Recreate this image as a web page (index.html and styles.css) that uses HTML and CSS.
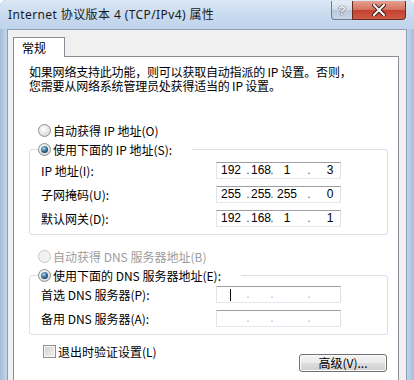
FILE: index.html
```html
<!DOCTYPE html>
<html lang="zh-CN">
<head>
  <meta charset="UTF-8" />
  <meta name="viewport" content="width=device-width, initial-scale=1.0"/>
  <title>Internet 协议版本 4 (TCP/IPv4) 属性</title>
  <link rel="stylesheet" href="styles.css">
</head>
<body>
  <div class="window">
    <div class="titlebar">
      <span class="title">Internet 协议版本 4 (TCP/IPv4) 属性</span>
      <div class="caption-buttons">
        <span class="cap help">?</span>
        <span class="cap close">
          <svg width="14" height="12" viewBox="0 0 14 12">
            <path d="M2 1 L12 11 M12 1 L2 11" stroke="#3a1a14" stroke-width="4" stroke-linecap="square"/>
            <path d="M2 1 L12 11 M12 1 L2 11" stroke="#ffffff" stroke-width="2" stroke-linecap="square"/>
          </svg>
        </span>
      </div>
    </div>

    <div class="client">
      <div class="tabs">
        <span class="tab">常规</span>
      </div>

      <div class="panel">
        <div class="intro">
          <div>如果网络支持此功能，则可以获取自动指派的 IP 设置。否则，</div>
          <div>您需要从网络系统管理员处获得适当的 IP 设置。</div>
        </div>

        <div class="option first"><span class="radio"></span>自动获得 IP 地址(O)</div>

        <fieldset class="group">
          <legend class="option"><span class="radio on"></span>使用下面的 IP 地址(S):</legend>
          <div class="field">
            <label>IP 地址(I):</label>
            <div class="ip">
              <span>192</span><span class="dot">.</span><span>168</span><span class="dot">.</span><span>1</span><span class="dot">.</span><span>3</span>
            </div>
          </div>
          <div class="field">
            <label>子网掩码(U):</label>
            <div class="ip">
              <span>255</span><span class="dot">.</span><span>255</span><span class="dot">.</span><span>255</span><span class="dot">.</span><span>0</span>
            </div>
          </div>
          <div class="field">
            <label>默认网关(D):</label>
            <div class="ip">
              <span>192</span><span class="dot">.</span><span>168</span><span class="dot">.</span><span>1</span><span class="dot">.</span><span>1</span>
            </div>
          </div>
        </fieldset>

        <div class="option disabled dns-auto"><span class="radio off"></span>自动获得 DNS 服务器地址(B)</div>

        <fieldset class="group dns">
          <legend class="option"><span class="radio on"></span>使用下面的 DNS 服务器地址(E):</legend>
          <div class="field">
            <label>首选 DNS 服务器(P):</label>
            <div class="ip empty">
              <span><i class="caret"></i></span><span class="dot">.</span><span></span><span class="dot">.</span><span></span><span class="dot">.</span><span></span>
            </div>
          </div>
          <div class="field">
            <label>备用 DNS 服务器(A):</label>
            <div class="ip empty">
              <span></span><span class="dot">.</span><span></span><span class="dot">.</span><span></span><span class="dot">.</span><span></span>
            </div>
          </div>
        </fieldset>

        <div class="footer">
          <label class="check"><span class="box"></span>退出时验证设置(L)</label>
          <button class="btn">高级(V)...</button>
        </div>
      </div>
    </div>
  </div>
</body>
</html>
```

FILE: styles.css
```css
body {
  margin: 0;
  background: #ffffff;
  font-family: "Noto Sans CJK SC", "Noto Sans", sans-serif;
  font-size: 12px;
  color: #000;
}

.window {
  width: 414px;
  height: 380px;
  overflow: hidden;
  background: linear-gradient(90deg, #a4bcd8 0px, #c3d6ec 7px, #c8daee 50%, #c3d6ec 406px, #a7bfdb 414px);
  border-top-left-radius: 6px;
  border-top-right-radius: 6px;
}

.titlebar {
  height: 29px;
  display: flex;
  justify-content: space-between;
  background: linear-gradient(#dbe8f6, #c6d9ee 60%, #bfd4eb);
  border-top-left-radius: 6px;
  border-top-right-radius: 6px;
}

.title {
  font-family: "Noto Sans", "Noto Sans CJK SC", sans-serif;
  font-size: 12px;
  line-height: 29px;
  padding-left: 8px;
  letter-spacing: 0.4px;
  color: #1a1a1a;
}

.caption-buttons {
  display: flex;
  margin: 1px 8px 0 0;
  height: 18px;
}

.cap {
  display: flex;
  align-items: center;
  justify-content: center;
  height: 18px;
  border: 1px solid #6c7e96;
  border-top: none;
}

.help {
  width: 20px;
  border-right: none;
  border-bottom-left-radius: 4px;
  background: linear-gradient(#e6eef7, #cfdbe9 50%, #b9c9dc 51%, #c8d6e6);
  color: #f4f7fb;
  font-family: "Liberation Sans", sans-serif;
  font-weight: bold;
  font-size: 13px;
  text-shadow: 0 0 1px #445, 0 0 1px #445;
}

.close {
  width: 52px;
  border-color: #6b2a22;
  border-bottom-right-radius: 4px;
  background: linear-gradient(#e6a191, #d4705e 50%, #c3402f 51%, #cf5a43);
}

.client {
  width: 386px;
  height: 360px;
  margin-left: 7px;
  padding: 7px 7px 0 5px;
  background: #f0f0f0;
  border: 1px solid #8a9db5;
  border-bottom: none;
}

.tabs {
  display: flex;
}

.tab {
  width: 52px;
  height: 20px;
  margin-bottom: -1px;
  padding-left: 8px;
  line-height: 20px;
  background: #ffffff;
  border: 1px solid #898c95;
  border-bottom: none;
  position: relative;
  z-index: 1;
  box-sizing: border-box;
}

.panel {
  height: 330px;
  padding: 8px 10px 0 15px;
  background: #ffffff;
  border: 1px solid #898c95;
}

.intro {
  line-height: 14px;
  letter-spacing: -0.2px;
}

.intro div {
  height: 14px;
  white-space: nowrap;
}

.option {
  display: flex;
  align-items: center;
  height: 19px;
  white-space: nowrap;
}

.option.first {
  margin-top: 28px;
  padding-left: 9px;
}

.radio {
  width: 11px;
  height: 11px;
  margin-right: 2px;
  border: 1px solid #8e8f8f;
  border-radius: 50%;
  background: radial-gradient(circle at 40% 35%, #ffffff, #dcdcdc 70%, #c4c4c4);
  flex: none;
  position: relative;
}

.radio.on::after {
  content: "";
  position: absolute;
  left: 2px;
  top: 2px;
  width: 7px;
  height: 7px;
  border-radius: 50%;
  background: radial-gradient(circle at 40% 35%, #9fd8f2, #2c5d86 55%, #1b2f44);
}

.radio.off {
  border-color: #c8c8c8;
  background: #f2f2f2;
}

.disabled {
  color: #9d9d9d;
}

.group {
  margin: 0;
  padding: 3px 0 7px 11px;
  border: 1px solid #d5dfe5;
  border-radius: 3px;
}

.group legend {
  margin-left: -3px;
  padding: 0 20px 0 0;
}

.field {
  display: grid;
  grid-template-columns: 175px 125px;
  align-items: center;
  height: 17px;
}

.field + .field {
  margin-top: 7px;
}

.ip {
  height: 17px;
  box-sizing: border-box;
  display: grid;
  grid-template-columns: 28px 6px 16px 10px 20px 24px 18px;
  align-items: center;
  border: 1px solid #abadb3;
  border-top-color: #9c9ea4;
  border-left-color: #e2e3ea;
  border-right-color: #dbdfe6;
  border-bottom-color: #e3e9ef;
  background: #fff;
  font-family: "Liberation Sans", sans-serif;
  font-size: 12px;
  line-height: 15px;
  text-align: center;
}

.ip .dot {
  color: #555;
}

.ip.empty .dot {
  color: #b0b0b0;
}

.caret {
  display: inline-block;
  width: 1px;
  height: 12px;
  background: #000;
  vertical-align: middle;
  margin-left: -2px;
}

.dns-auto {
  margin-top: 12px;
  padding-left: 9px;
}

.dns {
  padding-top: 1px;
}

.footer {
  display: flex;
  justify-content: space-between;
  align-items: flex-start;
  padding: 10px 1px 0 14px;
}

.check {
  display: flex;
  align-items: center;
  height: 13px;
  white-space: nowrap;
}

.box {
  width: 11px;
  height: 11px;
  margin-right: 2px;
  border: 1px solid #8f8f8f;
  background: linear-gradient(135deg, #d2d2d2, #f2f2f2);
  box-shadow: inset 0 0 0 1px #f7f7f7;
}

.btn {
  margin-top: 9px;
  width: 88px;
  height: 18px;
  padding: 0;
  border: 1px solid #707070;
  border-radius: 3px;
  background: linear-gradient(#f2f2f2, #ebebeb 50%, #dddddd 51%, #cfcfcf);
  box-shadow: inset 0 0 0 1px #fcfcfc;
  font-family: "Noto Sans CJK SC", sans-serif;
  font-size: 12px;
  line-height: 16px;
  color: #000;
}
```
